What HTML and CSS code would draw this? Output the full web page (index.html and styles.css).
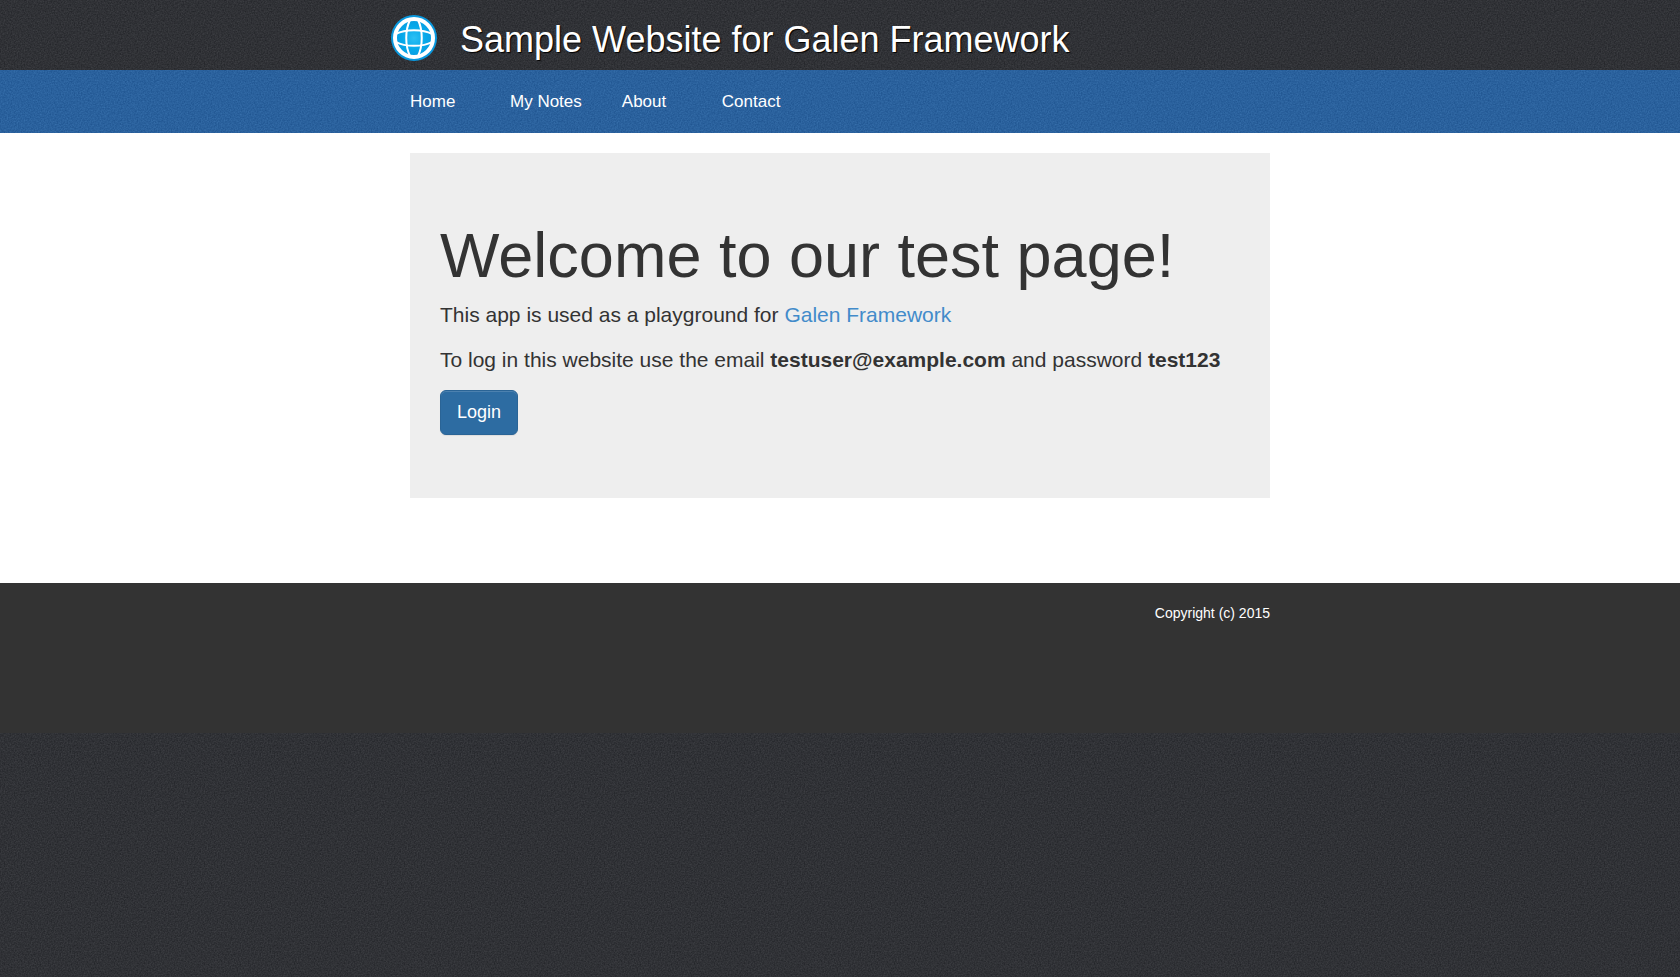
FILE: index.html
```html
<!DOCTYPE html>
<html lang="en">
<head>
<meta charset="utf-8">
<meta name="viewport" content="width=device-width, initial-scale=1">
<title>Sample Website for Galen Framework</title>
<link rel="stylesheet" href="styles.css">
</head>
<body>
<header class="header">
  <div class="container header-inner">
    <svg class="logo" viewBox="0 0 46 46" aria-hidden="true">
      <defs>
        <radialGradient id="globe">
          <stop offset="0" stop-color="#2cc0f4"/>
          <stop offset="0.5" stop-color="#06a9ea"/>
          <stop offset="1" stop-color="#0a96dc"/>
        </radialGradient>
      </defs>
      <circle cx="23" cy="23" r="23" fill="url(#globe)"/>
      <g fill="none" stroke="#fff">
        <circle cx="23" cy="23" r="19" stroke-width="4"/>
        <g stroke-width="2">
          <path d="M19 5C14 15 14 31 19 41M27 5C32 15 32 31 27 41"/>
          <path d="M5 19C14 14 32 14 41 19M5 27C14 32 32 32 41 27"/>
        </g>
      </g>
    </svg>
    <div class="site-name">Sample Website for Galen Framework</div>
  </div>
</header>
<nav class="menu">
  <ul class="container menu-list">
    <li><a href="#">Home</a></li>
    <li><a href="#">My Notes</a></li>
    <li><a href="#">About</a></li>
    <li><a href="#">Contact</a></li>
  </ul>
</nav>
<main class="content">
  <div class="container content-inner">
    <section class="welcome">
      <h1>Welcome to our test page!</h1>
      <p>This app is used as a playground for <a href="#">Galen Framework</a></p>
      <p>To log in this website use the email <b>testuser@example.com</b> and password <b>test123</b></p>
      <button class="button-login" type="button">Login</button>
    </section>
  </div>
</main>
<footer class="footer">
  <div class="container footer-inner">Copyright (c) 2015</div>
</footer>
</body>
</html>
```
FILE: styles.css
```css
* {
  box-sizing: border-box;
}

body {
  margin: 0;
  color: #333;
  font: 14px/20px "Liberation Sans", Arial, sans-serif;
  background: #303136 url("data:image/svg+xml,%3Csvg xmlns='http://www.w3.org/2000/svg' width='200' height='200'%3E%3Cfilter id='n' x='0' y='0' width='1' height='1' color-interpolation-filters='sRGB'%3E%3CfeTurbulence type='fractalNoise' baseFrequency='.7' numOctaves='2' stitchTiles='stitch'/%3E%3CfeColorMatrix values='.14 0 0 0 .119 .14 0 0 0 .125 .14 0 0 0 .142 0 0 0 0 1'/%3E%3C/filter%3E%3Crect width='200' height='200' filter='url(%23n)'/%3E%3C/svg%3E");
}

.container {
  width: 100%;
  max-width: 900px;
  margin: 0 auto;
}

.header-inner {
  display: flex;
  gap: 22px;
  padding: 15px 0 5px;
}

.logo {
  flex: none;
  width: 48px;
  height: 46px;
}

.site-name {
  color: #fff;
  font-size: 36px;
  line-height: 50px;
  text-shadow: 1px 1px 1px #000;
}

.menu {
  background: #2a629f url("data:image/svg+xml,%3Csvg xmlns='http://www.w3.org/2000/svg' width='200' height='200'%3E%3Cfilter id='n' x='0' y='0' width='1' height='1' color-interpolation-filters='sRGB'%3E%3CfeTurbulence type='fractalNoise' baseFrequency='.7' numOctaves='2' stitchTiles='stitch'/%3E%3CfeColorMatrix values='.12 0 0 0 .105 .14 0 0 0 .31 .14 0 0 0 .545 0 0 0 0 1'/%3E%3C/filter%3E%3Crect width='200' height='200' filter='url(%23n)'/%3E%3C/svg%3E");
}

.menu-list {
  display: flex;
  flex-wrap: wrap;
  padding: 0;
  list-style: none;
}

.menu-list a {
  display: block;
  min-width: 100px;
  padding: 20px;
  color: #fff;
  font-size: 17px;
  line-height: 23px;
  text-decoration: none;
}

.content {
  background: #fff;
}

.content-inner {
  padding: 20px 20px 85px;
}

.welcome {
  padding: 68px 30px 63px;
  background: #eee;
}

.welcome h1 {
  margin: 0 0 10px;
  font-size: 63px;
  font-weight: 400;
  line-height: 69px;
}

.welcome p {
  margin: 0 0 15px;
  font-size: 21px;
  line-height: 30px;
}

.welcome a {
  color: #428bca;
  text-decoration: none;
}

.button-login {
  display: block;
  padding: 10px 16px;
  border: 1px solid #2a6496;
  border-radius: 6px;
  color: #fff;
  background: #2d6ca2;
  box-shadow: inset 0 1px 0 rgba(255, 255, 255, 0.15), 0 1px 1px rgba(0, 0, 0, 0.075);
  font: 18px/23px "Liberation Sans", Arial, sans-serif;
  cursor: pointer;
}

.footer {
  min-height: 150px;
  color: #fff;
  background: #333;
}

.footer-inner {
  padding: 20px;
  text-align: right;
}
```
